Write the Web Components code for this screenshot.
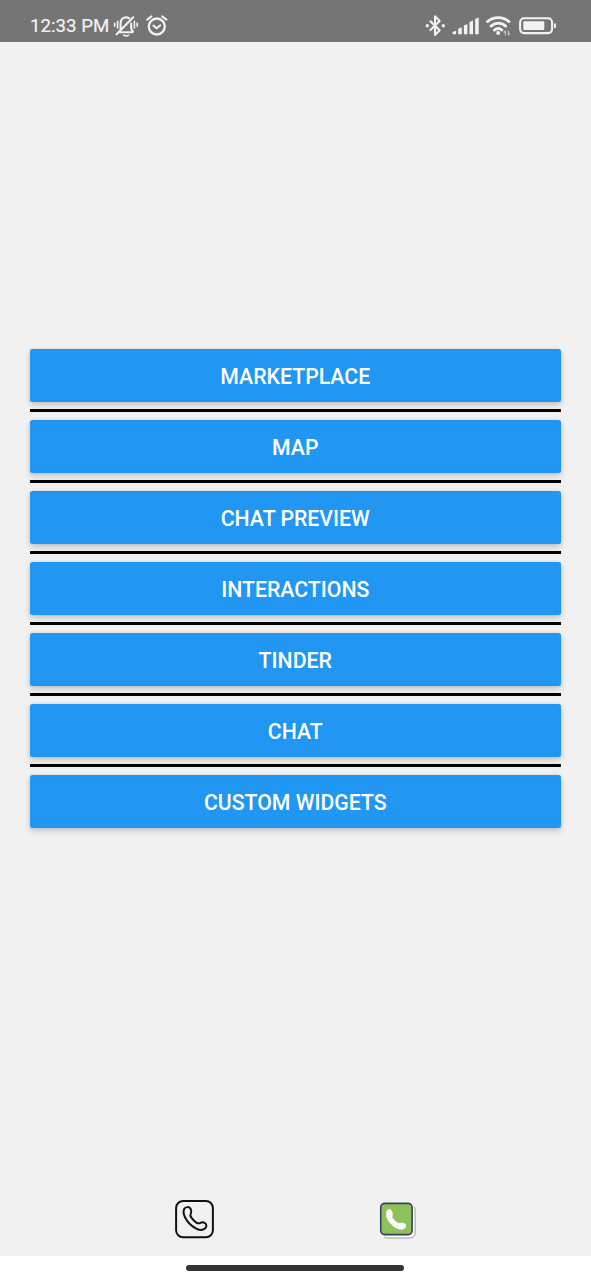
<!DOCTYPE html>
<html lang="en">
<head>
<meta charset="utf-8">
<title>Menu</title>
<style>
html,body{margin:0;height:100%}
body{font-family:Roboto,"Liberation Sans",sans-serif;background:#f1f1f1;overflow:hidden}
</style>
</head>
<body>
<phone-screen>
  <status-bar slot="status"></status-bar>
  <menu-list>
    <menu-button>MARKETPLACE</menu-button>
    <menu-line></menu-line>
    <menu-button>MAP</menu-button>
    <menu-line></menu-line>
    <menu-button>CHAT PREVIEW</menu-button>
    <menu-line></menu-line>
    <menu-button>INTERACTIONS</menu-button>
    <menu-line></menu-line>
    <menu-button>TINDER</menu-button>
    <menu-line></menu-line>
    <menu-button>CHAT</menu-button>
    <menu-line></menu-line>
    <menu-button>CUSTOM WIDGETS</menu-button>
  </menu-list>
  <tab-bar slot="tabs"></tab-bar>
  <gesture-bar slot="gesture"></gesture-bar>
</phone-screen>
<script>
function define(name, html) {
  const template = document.createElement('template');
  template.innerHTML = html;
  customElements.define(name, class extends HTMLElement {
    constructor() {
      super();
      this.attachShadow({mode: 'open'}).append(template.content.cloneNode(true));
    }
  });
}

define('phone-screen', `
<style>
:host{display:flex;flex-direction:column;height:1280px;background:#f1f1f1}
main{flex:1;box-sizing:border-box;padding:307px 30px 0 29.5px}
</style>
<slot name="status"></slot><main><slot></slot></main><slot name="tabs"></slot><slot name="gesture"></slot>`);

define('status-bar', `
<style>
:host{display:flex;box-sizing:border-box;height:41.5px;background:#757575;color:#f2f2f2;padding:0 0 0 30px;align-items:flex-start}
time{font-size:18.7px;line-height:23px;margin-top:15px;width:83px;white-space:nowrap;-webkit-text-stroke:.2px #f2f2f2}
svg{display:block;flex:none;fill:none;stroke:#f2f2f2;stroke-linecap:round;stroke-linejoin:round}
.left{width:58px;height:41px}
.right{margin-left:249px;width:136px;height:41px}
</style>
<time>12:33 PM</time>
<svg class="left" viewBox="113 0 58 41" stroke-width="2.1">
  <path d="M118.8 32.2h13.8M120.6 29.5v-5.7c0-3.8 2.1-6.2 5.3-6.5 1.2 0 2.3.3 3.1.8M131.2 23.5v5.3l1.7 2.8M133.2 17.3L116.6 34.3"/>
  <path d="M123.9 35.2c1.1 1 3.4 1 4.5 0" stroke-width="1.8"/>
  <path d="M117.6 21.4v6.6M114.7 23.2v3M134.4 21.4v6.6M137.2 23.2v3" stroke-width="1.6"/>
  <circle cx="156.8" cy="26.5" r="8" stroke-width="2.3"/>
  <path d="M153.4 25.6l3.2 2.7 3.7-3" stroke-width="2.1"/>
  <path d="M147.2 19.6l4.2-3.2M162.2 16.4l4.2 3.2" stroke-width="2"/>
</svg>
<svg class="right" viewBox="420 0 136 41">
  <path d="M430.4 21.3l9.3 9-4.7 4.7V16.2l4.7 4.7-9.3 9.2" stroke-width="2.1" stroke-linejoin="round"/>
  <circle cx="427.3" cy="25.8" r="1.7" fill="#f2f2f2" stroke="none"/><circle cx="443.3" cy="25.8" r="1.7" fill="#f2f2f2" stroke="none"/>
  <path d="M452.6 32l3.5-1.3v3.6h-3.5ZM458.2 28.8l3.6-1.5v7h-3.6ZM463.9 25.5l3.5-1.5v10.3h-3.5ZM469.5 22.1l3.5-1.6v13.8h-3.5ZM475.2 19l3.5-1.6v16.9h-3.5Z" fill="#f2f2f2" stroke="none"/>
  <path d="M487.5 21.6c6.3-5.2 15.3-5.2 21.4 0M491 26.1c4.4-3.9 10.3-3.9 14.6 0M494.4 30.1c2.4-2.1 5.2-2.1 7.5 0" stroke-width="2.8"/>
  <circle cx="498.2" cy="32.9" r="2" fill="#f2f2f2" stroke="none"/>
  <path d="M505.4 35v-4l-1.3 1.5M508.5 31v4l1.3-1.5" stroke="#d0d0d0" stroke-width="1.1"/>
  <rect x="520.1" y="18.2" width="32" height="14.9" rx="4" stroke-width="2.1"/>
  <rect x="523.3" y="21.2" width="21" height="8.9" rx="1.2" fill="#f2f2f2" stroke="none"/>
  <path d="M555 24.2v3.1" stroke-width="1.9"/>
</svg>`);

define('menu-list', `
<style>:host{display:flex;flex-direction:column}</style><slot></slot>`);

define('menu-button', `
<style>
:host{display:block;height:53px}
button{display:block;width:100%;height:53px;border:0;padding:3.3px 0 0;border-radius:2.5px;background:#2196f3;color:#fff;
font:500 21.25px/24px Roboto,"Liberation Sans",sans-serif;text-align:center;box-shadow:0 3px 6px rgba(0,0,0,.18),0 0 3px rgba(0,0,0,.1)}
</style><button><slot></slot></button>`);

define('menu-line', `
<style>:host{display:block;position:relative;height:3px;margin:7.1px 0 8px;background:#000}</style>`);

define('tab-bar', `
<style>
:host{display:grid;grid-template-columns:40px 40px;column-gap:163px;padding-left:175px;height:57px}
svg{display:block}
</style>
<svg width="40" height="40" viewBox="175 1199 40 40" fill="none" stroke="#111">
  <rect x="176.1" y="1200.9" width="36.8" height="36.4" rx="7" stroke-width="2"/>
  <path d="M184.2 1209C185.4 1206.6 189.2 1206.4 190.7 1209C191.8 1211 191.6 1212.2 190.8 1213.6C190 1215 190.3 1216.2 191.4 1217.7C192.8 1219.7 194.5 1221.4 196.3 1222.6C197.7 1223.5 199 1223.6 200.4 1222.9C202 1222 203.6 1222.1 205.2 1223.3C206.9 1224.6 206.7 1227 205.2 1228.3C202.5 1230.6 199 1230.3 195.3 1228.2C190.7 1225.5 187.2 1221.9 185 1217.3C183.5 1214.1 183 1211.5 184.2 1209Z" stroke-width="2"/>
</svg>
<svg width="40" height="40" viewBox="378 1199 40 40">
  <rect x="382.5" y="1205" width="32.6" height="33" rx="5" fill="#fff" stroke="#a09da4"/>
  <rect x="379.4" y="1202" width="34.5" height="34.5" rx="5" fill="#fff"/>
  <rect x="380.7" y="1203.4" width="31.4" height="31.2" rx="3.8" fill="#8fc15a" stroke="#34415a" stroke-width="1.6"/>
  <path d="M386.5 1211.5C387.3 1208.9 390.2 1208.2 391.5 1210.4C392.8 1212.6 393.2 1214.2 392.6 1215.5C392.2 1216.6 392.5 1217.4 393.3 1218.5C394.4 1220 395.9 1221.4 397.6 1222.4C398.8 1223.1 399.6 1223.2 400.8 1222.9C402.2 1222.5 403.6 1222.7 405 1223.6C406.4 1224.5 406.5 1225.9 405.7 1227.2C404.2 1229.4 401.7 1230.2 398.9 1229.3C393.5 1227.5 388.8 1223.2 386.7 1217.8C386 1215.6 385.9 1213.5 386.5 1211.5Z" fill="#fafafa"/>
</svg>`);

define('gesture-bar', `
<style>
:host{display:flex;box-sizing:border-box;height:24px;background:#fff;justify-content:flex-start;padding:9px 0 0 186px}
i{display:block;width:218px;height:6px;border-radius:3px;background:#333}
</style><i></i>`);
</script>
</body>
</html>
